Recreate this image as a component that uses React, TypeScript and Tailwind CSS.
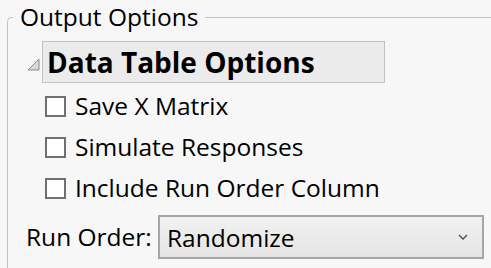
import React from 'react';

const font = { fontFamily: '"Open Sans", "Noto Sans", sans-serif' };

const CheckRow: React.FC<{ label: string }> = ({ label }) => (
  <div className="flex items-center h-[41px]">
    <span className="w-[21px] h-[21px] border-2 border-[#707070] bg-white shrink-0" />
    <span className="ml-[9px] text-[24.5px] text-black leading-none">{label}</span>
  </div>
);

export default function App() {
  return (
    <div className="w-[491px] h-[268px] bg-[#f7f7f7] overflow-hidden pt-[1px]" style={font}>
      <fieldset className="ml-[7px] h-[290px] border-t border-l border-[#c4c4c4] rounded-tl-[5px]">
        <legend className="ml-[5px] px-[7px] text-[24.5px] leading-[32px] text-black">Output Options</legend>

        <div className="pl-[19px]">
          <div className="flex items-center mt-[8px]">
            <svg width="13" height="13" viewBox="0 0 13 13" className="mr-[2px] mt-[5px]">
              <path d="M12 1 L12 12 L1 12 Z" fill="#d8d8d8" stroke="#8a8a8a" strokeWidth="1" />
            </svg>
            <div className="w-[343px] h-[42px] bg-[#ebebeb] border border-[#c2c2c2] flex items-center pl-[4px]">
              <span className="text-[28px] font-bold text-black leading-none">Data Table Options</span>
            </div>
          </div>

          <div className="pl-[18px] mt-[3px]">
            <CheckRow label="Save X Matrix" />
            <CheckRow label="Simulate Responses" />
            <CheckRow label="Include Run Order Column" />
          </div>

          <div className="flex items-center mt-[6px] -ml-[1px]">
            <span className="w-[132px] shrink-0 text-[24.5px] text-black leading-none">Run Order:</span>
            <div className="w-[326px] h-[44px] border-2 border-[#a6a6a6] bg-gradient-to-b from-[#f2f2f2] to-[#e4e4e4] flex items-center justify-between pl-[7px] pr-[14px]">
              <span className="text-[24.5px] text-black leading-none mt-[2px]">Randomize</span>
              <svg width="10" height="6" viewBox="0 0 10 6">
                <path d="M1 1 L5 5 L9 1" fill="none" stroke="#555" strokeWidth="1.5" />
              </svg>
            </div>
          </div>
        </div>
      </fieldset>
    </div>
  );
}
